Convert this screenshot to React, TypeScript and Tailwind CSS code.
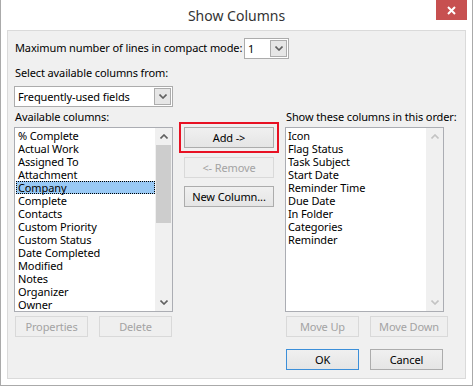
import React from 'react';

const Chevron = ({ up = false, color = '#606060' }: { up?: boolean; color?: string }) => (
  <svg width="8" height="5" viewBox="0 0 8 5" className={up ? 'rotate-180' : ''}>
    <path d="M0.5 0.5 L4 4 L7.5 0.5" fill="none" stroke={color} strokeWidth="1.6" />
  </svg>
);

const Btn = ({
  label,
  disabled = false,
  primary = false,
  className = '',
}: {
  label: string;
  disabled?: boolean;
  primary?: boolean;
  className?: string;
}) => (
  <div
    className={`h-[21px] flex items-center justify-center border leading-none whitespace-nowrap ${
      disabled
        ? 'border-[#d9d9d9] bg-[#efefef] text-[#a3a3a3]'
        : primary
        ? 'border-[#3c8fd9] bg-linear-to-b from-[#f0f0f0] to-[#e5e5e5] text-black'
        : 'border-[#acacac] bg-linear-to-b from-[#f0f0f0] to-[#e5e5e5] text-black'
    } ${className}`}
  >
    {label}
  </div>
);

const Dropdown = ({ value, className = '' }: { value: string; className?: string }) => (
  <div className={`h-[21px] flex items-center border border-[#acacac] bg-white ${className}`}>
    <span className="flex-1 pl-[3px] leading-none whitespace-nowrap">{value}</span>
    <div className="w-[17px] h-[17px] mr-[1px] flex items-center justify-center border border-[#acacac] bg-[#e6e6e6]">
      <Chevron />
    </div>
  </div>
);

const available = [
  '% Complete',
  'Actual Work',
  'Assigned To',
  'Attachment',
  'Company',
  'Complete',
  'Contacts',
  'Custom Priority',
  'Custom Status',
  'Date Completed',
  'Modified',
  'Notes',
  'Organizer',
  'Owner',
];

const shown = [
  'Icon',
  'Flag Status',
  'Task Subject',
  'Start Date',
  'Reminder Time',
  'Due Date',
  'In Folder',
  'Categories',
  'Reminder',
];

export default function App() {
  return (
    <div className="w-[473px] h-[386px] bg-white border-x border-b border-[#aaaaaa] flex flex-col font-['Noto_Sans',sans-serif] text-[11px] tracking-[-0.12px] text-black">
      {/* title bar */}
      <div className="relative h-[30px] shrink-0 flex items-center justify-center">
        <span className="text-[14px] tracking-normal text-[#333333] mt-[1px]">Show Columns</span>
        <div className="absolute right-[5px] top-0 w-[31px] h-[20px] bg-[#c75050] flex items-center justify-center">
          <svg width="9" height="9" viewBox="0 0 9 9">
            <path d="M1 1 L8 8 M8 1 L1 8" stroke="white" strokeWidth="2" />
          </svg>
        </div>
      </div>

      {/* client */}
      <div className="flex-1 mx-[6px] mb-[6px] border border-[#dadada] bg-[#f0f0f0] pl-[6px] pt-[7px] flex flex-col">
        <div className="flex items-center h-[21px]">
          <span className="w-[230px] shrink-0 pl-[1px] whitespace-nowrap">Maximum number of lines in compact mode:</span>
          <Dropdown value="1" className="w-[45px]" />
        </div>
        <div className="mt-[6px] h-[16px] leading-[16px] pl-[1px] whitespace-nowrap">Select available columns from:</div>
        <Dropdown value="Frequently-used fields" className="w-[159px] mt-[5px]" />

        <div className="flex mt-[2px]">
          {/* left column */}
          <div className="w-[159px] flex flex-col">
            <div className="h-[16px] leading-[16px] pl-[1px] whitespace-nowrap">Available columns:</div>
            <div className="mt-[2px] h-[185px] border border-[#abadb3] bg-white flex overflow-hidden">
              <div className="flex-1 pt-[1px] pl-[1px]">
                {available.map((item) => (
                  <div
                    key={item}
                    className={`h-[13px] leading-[13px] pl-[2px] whitespace-nowrap ${
                      item === 'Company' ? 'bg-[#99c9f5] outline-1 outline-dotted outline-black -outline-offset-1' : ''
                    }`}
                  >
                    {item}
                  </div>
                ))}
              </div>
              <div className="w-[17px] bg-[#f0f0f0] flex flex-col items-center">
                <div className="h-[17px] flex items-center justify-center">
                  <Chevron up />
                </div>
                <div className="w-[15px] h-[78px] bg-[#cdcdcd]" />
                <div className="flex-1" />
                <div className="h-[17px] flex items-center justify-center">
                  <Chevron />
                </div>
              </div>
            </div>
            <div className="flex gap-[11px] mt-[4px] pl-[1px]">
              <Btn label="Properties" disabled className="w-[73px]" />
              <Btn label="Delete" disabled className="w-[73px]" />
            </div>
          </div>

          {/* middle column */}
          <div className="ml-[6px] mt-[13px] w-[100px] flex flex-col">
            <div className="border-2 border-[#e81123] p-[3px]">
              <Btn label="Add ->" />
            </div>
            <Btn label="<- Remove" disabled className="mt-[4px] mx-[5px]" />
            <Btn label="New Column..." className="mt-[8px] mx-[5px]" />
          </div>

          {/* right column */}
          <div className="ml-[6px] w-[163px] flex flex-col">
            <div className="h-[16px] leading-[16px] pl-[1px] whitespace-nowrap">Show these columns in this order:</div>
            <div className="mt-[2px] h-[185px] w-[159px] border border-[#abadb3] bg-white flex overflow-hidden">
              <div className="flex-1 pt-[1px] pl-[1px]">
                {shown.map((item) => (
                  <div key={item} className="h-[13px] leading-[13px] pl-[1px] whitespace-nowrap">
                    {item}
                  </div>
                ))}
              </div>
              <div className="w-[17px] bg-[#f0f0f0] flex flex-col items-center">
                <div className="h-[17px] flex items-center justify-center">
                  <Chevron up color="#c3c3c3" />
                </div>
                <div className="flex-1" />
                <div className="h-[17px] flex items-center justify-center">
                  <Chevron color="#c3c3c3" />
                </div>
              </div>
            </div>
            <div className="flex gap-[11px] mt-[4px] pl-[1px]">
              <Btn label="Move Up" disabled className="w-[73px]" />
              <Btn label="Move Down" disabled className="w-[78px]" />
            </div>
            <div className="flex gap-[11px] mt-[12px] pl-[1px]">
              <Btn label="OK" primary className="w-[73px]" />
              <Btn label="Cancel" className="w-[73px]" />
            </div>
          </div>
        </div>
      </div>
    </div>
  );
}
